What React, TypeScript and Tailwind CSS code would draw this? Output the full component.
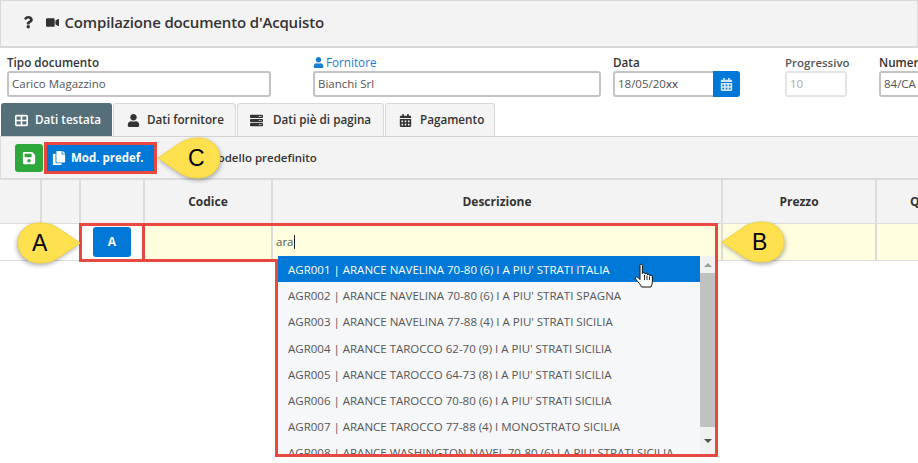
import { FaCalendarAlt, FaCopy, FaQuestion, FaSave, FaServer, FaUser, FaVideo } from "react-icons/fa";
import { FaTableCellsLarge } from "react-icons/fa6";
import type { ReactNode } from "react";

const items = [
  "AGR001 | ARANCE NAVELINA 70-80 (6) I A PIU' STRATI ITALIA",
  "AGR002 | ARANCE NAVELINA 70-80 (6) I A PIU' STRATI SPAGNA",
  "AGR003 | ARANCE NAVELINA 77-88 (4) I A PIU' STRATI SICILIA",
  "AGR004 | ARANCE TAROCCO 62-70 (9) I A PIU' STRATI SICILIA",
  "AGR005 | ARANCE TAROCCO 64-73 (8) I A PIU' STRATI SICILIA",
  "AGR006 | ARANCE TAROCCO 70-80 (6) I A PIU' STRATI SICILIA",
  "AGR007 | ARANCE TAROCCO 77-88 (4) I MONOSTRATO SICILIA",
  "AGR008 | ARANCE WASHINGTON NAVEL 70-80 (6) I A PIU' STRATI SICILIA",
];

function Callout({ letter, flip, className }: { letter: string; flip?: boolean; className: string }) {
  return (
    <div className={`absolute z-30 h-[42px] w-[64px] ${className}`}>
      <svg width="64" height="42" viewBox="0 0 64 42" className={`drop-shadow-[1px_2px_2px_rgba(0,0,0,0.3)] ${flip ? "-scale-x-100" : ""}`}>
        <path
          d="M1 21 L23 6 C29 2 35 1 42 1 C54 1 63 10 63 21 C63 32 54 41 42 41 C35 41 29 40 23 36 Z"
          fill="#ffe14f"
          stroke="#f2d244"
          strokeWidth="1"
        />
      </svg>
      <span className={`absolute top-[7px] font-['Liberation_Sans',sans-serif] text-[23px] leading-[28px] text-black ${flip ? "left-[15px]" : "left-[31px]"}`}>
        {letter}
      </span>
    </div>
  );
}

function Field({ label, value, className, muted }: { label: ReactNode; value: string; className: string; muted?: boolean }) {
  return (
    <div className={`shrink-0 ${className}`}>
      <div className={`h-[15px] font-semibold leading-[15px] ${muted ? "text-[11.5px] text-[#555]" : "text-[11.7px] text-[#333]"}`}>{label}</div>
      <div className={`mt-[1px] flex h-[26px] items-center rounded-[3px] border-2 bg-white px-[3px] text-[11.5px] ${muted ? "border-[#e4e4e4] text-[#aaa]" : "border-[#c4c4c4] text-[#555]"}`}>
        {value}
      </div>
    </div>
  );
}

function Tab({ icon, label, active, className }: { icon: ReactNode; label: string; active?: boolean; className: string }) {
  return (
    <div
      className={`flex h-[33px] shrink-0 items-center rounded-t-[3px] border border-b-0 text-[11.7px] font-semibold ${className} ${
        active ? "border-[#546e7a] bg-[#546e7a] text-white" : "border-[#d9d9d9] bg-[#f4f4f4] text-[#333]"
      }`}
    >
      {icon}
      {label}
    </div>
  );
}

function HeadCell({ className, children }: { className: string; children?: ReactNode }) {
  return (
    <div className={`flex shrink-0 items-center justify-center border-r-2 border-[#dcdcdc] text-[12px] font-bold text-[#333] ${className}`}>
      {children}
    </div>
  );
}

function RowCell({ className, children }: { className: string; children?: ReactNode }) {
  return <div className={`flex shrink-0 items-center border-r-2 border-[#dcdcdc] ${className}`}>{children}</div>;
}

export default function App() {
  return (
    <div className="relative h-[463px] w-[918px] overflow-hidden bg-white font-['Open_Sans',sans-serif] text-[#333]">
      {/* page title */}
      <div className="flex h-[48px] items-center border-x border-t border-b-2 border-[#d8d8d8] bg-[#f3f3f3] pb-[2px] pl-[21px] text-[#333]">
        <FaQuestion className="text-[12.5px]" />
        <FaVideo className="ml-[11px] text-[13px]" />
        <span className="ml-[6px] text-[15px] font-semibold tracking-[-0.16px]">Compilazione documento d'Acquisto</span>
      </div>

      {/* document fields */}
      <div className="flex h-[55px] items-start pl-[7px] pt-[7px]">
        <Field className="w-[264px]" label="Tipo documento" value="Carico Magazzino" />
        <Field
          className="ml-[42px] w-[288px]"
          label={
            <span className="flex items-center gap-[2px] font-normal text-[#1a7fd4]">
              <FaUser className="text-[11px]" />
              Fornitore
            </span>
          }
          value="Bianchi Srl"
        />
        <div className="ml-[12px] w-[127px] shrink-0">
          <div className="h-[15px] text-[11.7px] font-semibold leading-[15px] text-[#333]">Data</div>
          <div className="mt-[1px] flex h-[26px]">
            <div className="flex w-[100px] items-center rounded-l-[3px] border-2 border-r-0 border-[#c4c4c4] px-[3px] text-[11.5px] text-[#555]">
              18/05/20<span className="text-[#333]">xx</span>
            </div>
            <div className="flex w-[27px] items-center justify-center rounded-r-[3px] bg-[#0078d7] text-[13px] text-[#d5e8f8]">
              <FaCalendarAlt />
            </div>
          </div>
        </div>
        <Field className="ml-[45px] w-[62px]" muted label="Progressivo" value="10" />
        <Field className="ml-[32px] w-[80px]" label="Numero" value="84/CA" />
      </div>

      {/* tabs */}
      <div className="flex h-[34px] items-end gap-[1px] border-b border-[#d4d4d4] pl-[1px]">
        <Tab active className="w-[111px] pl-[13px]" icon={<FaTableCellsLarge className="mr-[7px] text-[13px]" />} label="Dati testata" />
        <Tab className="w-[123px] pl-[13px]" icon={<FaUser className="mr-[7px] text-[13px]" />} label="Dati fornitore" />
        <Tab className="w-[147px] pl-[12px]" icon={<FaServer className="mr-[10px] text-[13px]" />} label="Dati piè di pagina" />
        <Tab className="w-[110px] pl-[13px]" icon={<FaCalendarAlt className="mr-[8px] text-[13px]" />} label="Pagamento" />
      </div>

      {/* toolbar */}
      <div className="flex h-[42px] items-center border-l border-b border-[#dcdcdc] bg-[#f3f3f3] pl-[14px]">
        <div className="flex h-[28px] w-[28px] items-center justify-center rounded-[3px] bg-[#2ea83a] text-[14px] text-white">
          <FaSave />
        </div>
        <div className="ml-[4px] flex h-[27px] w-[107px] items-center gap-[5px] bg-[#0078d7] pl-[5px] text-[11.5px] font-bold text-white">
          <FaCopy className="text-[14px]" />
          Mod. predef.
        </div>
        <span className="ml-[9px] text-[11.5px] font-semibold text-[#333]">Applica modello predefinito</span>
      </div>

      {/* grid header */}
      <div className="flex h-[45px] w-[1000px] border-y border-[#dcdcdc] bg-[#f3f3f3]">
        <HeadCell className="w-[42px]" />
        <HeadCell className="w-[39px]" />
        <HeadCell className="w-[64px]" />
        <HeadCell className="w-[128px]">Codice</HeadCell>
        <HeadCell className="w-[450px]">Descrizione</HeadCell>
        <HeadCell className="w-[154px]">Prezzo</HeadCell>
        <div className="flex w-[120px] shrink-0 items-center justify-center text-[12px] font-bold">Quantità</div>
      </div>

      {/* grid row */}
      <div className="flex h-[37px] border-b border-[#dcdcdc]">
        <RowCell className="w-[81px] bg-white" />
        <RowCell className="w-[64px] justify-center bg-white">
          <div className="flex h-[30px] w-[38px] items-center justify-center rounded-[3px] bg-[#0078d7] text-[12px] font-bold text-white">A</div>
        </RowCell>
        <RowCell className="w-[128px] bg-[#ffffe0]" />
        <RowCell className="w-[450px] bg-[#ffffe0] pl-[3px] text-[11.5px] text-[#555]">
          ara<span className="ml-[1px] h-[14px] w-[1px] bg-[#222]" />
        </RowCell>
        <RowCell className="w-[154px] bg-[#ffffe0]" />
        <div className="flex-1 bg-[#ffffe0]" />
      </div>

      {/* autocomplete list */}
      <div className="absolute left-[278px] top-[256px] z-10 flex h-[199px] w-[438px] overflow-hidden bg-[#f5f7f9]">
        <div className="w-[422px] shrink-0">
          {items.map((item, i) => (
            <div
              key={item}
              className={`flex h-[26.2px] items-center whitespace-nowrap pl-[10px] pt-[1px] text-[11.5px] ${i === 0 ? "bg-[#0078d7] text-white" : "text-[#555]"}`}
            >
              {item}
            </div>
          ))}
        </div>
        <div className="flex w-[16px] flex-col items-center bg-[#f1f1f1]">
          <div className="flex h-[17px] w-full items-center justify-center">
            <div className="h-0 w-0 border-x-[4px] border-b-[4px] border-x-transparent border-b-[#a0a0a0]" />
          </div>
          <div className="h-[154px] w-full bg-[#c1c1c1]" />
          <div className="flex w-full flex-1 items-center justify-center">
            <div className="h-0 w-0 border-x-[4px] border-t-[4px] border-x-transparent border-t-[#505050]" />
          </div>
        </div>
      </div>

      {/* hand cursor */}
      <svg className="absolute left-[634px] top-[263px] z-20" width="20" height="26" viewBox="0 0 20 26">
        <path
          d="M6 2.2C6 .9 8.4.9 8.4 2.2V10.5C8.4 9.4 11 9.4 11 10.5V11.2C11 10.1 13.5 10.1 13.5 11.2V12C13.5 10.9 16 10.9 16 12V13C16 12 18.4 12 18.4 13V19C18.4 21 17.5 22 17 24H7.5C6.5 21.5 4.5 19.5 1.5 16C.5 14.5 2.5 13 4 14.5L6 16.5Z"
          fill="#fff"
          stroke="#111"
          strokeWidth="1"
          strokeLinejoin="round"
        />
        <path d="M10.5 12V17M13 12.5V17M15.5 13.5V17" stroke="#111" strokeWidth="0.9" fill="none" />
      </svg>

      {/* annotations */}
      <div className="absolute left-[44px] top-[142px] z-20 h-[32px] w-[113px] border-[3px] border-[#e8483f]" />
      <div className="absolute left-[79px] top-[223px] z-20 h-[39px] w-[66px] border-[3px] border-[#e8483f]" />
      <div className="absolute left-[142px] top-[223px] z-20 h-[39px] w-[576px] border-y-[3px] border-r-[3px] border-[#e8483f] [border-bottom-color:transparent]" />
      <div className="absolute left-[142px] top-[259px] z-20 h-[3px] w-[136px] bg-[#e8483f]" />
      <div className="absolute left-[275px] top-[259px] z-20 h-[198px] w-[443px] border-x-[3px] border-b-[3px] border-[#e8483f]" />
      <Callout letter="C" className="left-[157px] top-[137px]" />
      <Callout letter="A" flip className="left-[17px] top-[222px]" />
      <Callout letter="B" className="left-[721px] top-[221px]" />
    </div>
  );
}
